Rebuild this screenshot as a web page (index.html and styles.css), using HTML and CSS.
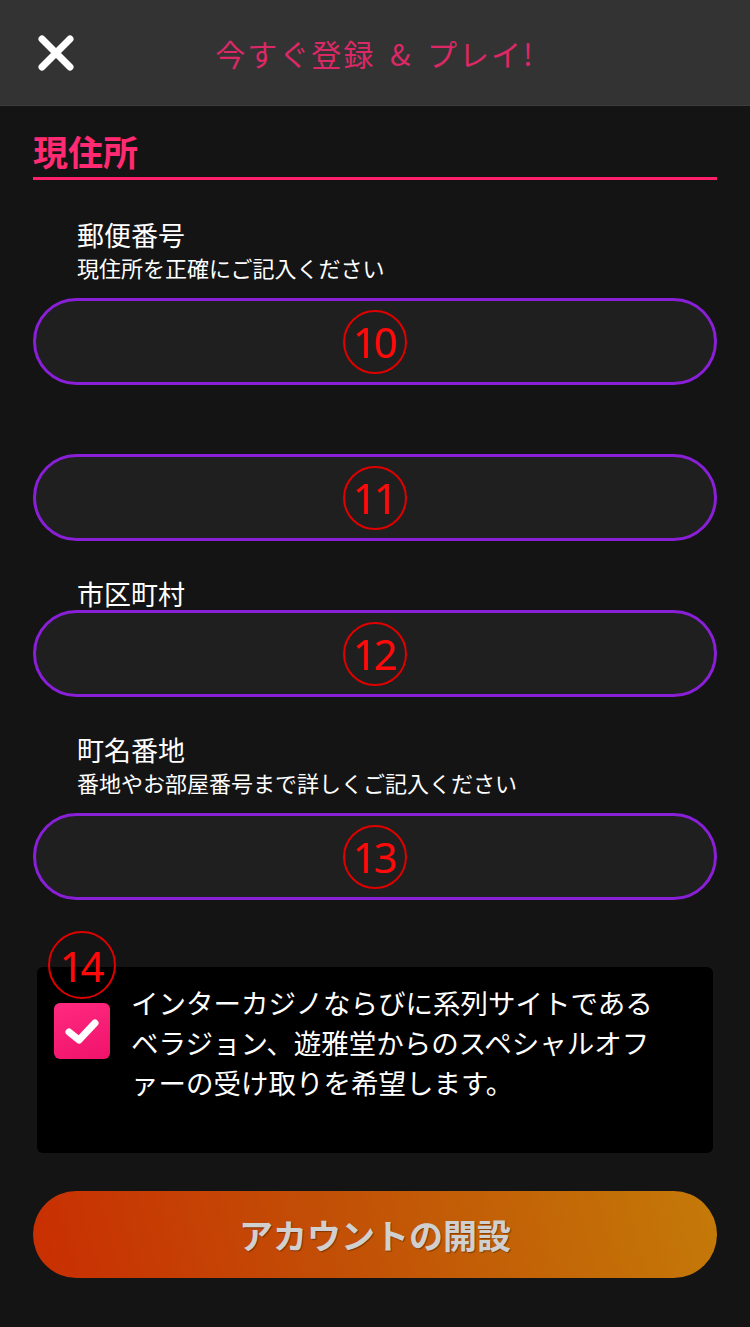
FILE: index.html
```html
<!DOCTYPE html>
<html lang="ja">
<head>
    <meta charset="UTF-8">
    <meta name="viewport" content="width=device-width, initial-scale=1.0">
    <title>今すぐ登録 & プレイ!</title>
    <link rel="stylesheet" href="styles.css">
</head>
<body>
    <header class="topbar">
        <button class="close-btn" type="button" aria-label="閉じる">
            <svg width="36" height="36" viewBox="0 0 36 36">
                <path d="M4 4 L32 32 M32 4 L4 32" stroke="#ffffff" stroke-width="7" stroke-linecap="round" fill="none"/>
            </svg>
        </button>
        <h1 class="topbar-title">今すぐ登録 &amp; プレイ!</h1>
        <span class="topbar-spacer"></span>
    </header>

    <main class="form">
        <h2 class="section-title">現住所</h2>

        <div class="field">
            <label class="field-label">郵便番号</label>
            <p class="field-note">現住所を正確にご記入ください</p>
            <div class="field-input"><span class="mark">10</span></div>
        </div>

        <div class="field field-gap">
            <div class="field-input"><span class="mark">11</span></div>
        </div>

        <div class="field">
            <label class="field-label">市区町村</label>
            <div class="field-input"><span class="mark">12</span></div>
        </div>

        <div class="field">
            <label class="field-label">町名番地</label>
            <p class="field-note">番地やお部屋番号まで詳しくご記入ください</p>
            <div class="field-input"><span class="mark">13</span></div>
        </div>

        <div class="consent">
            <span class="mark mark-over">14</span>
            <span class="checkbox">
                <svg width="56" height="56" viewBox="0 0 56 56">
                    <path d="M15 29 L25 37 L41 20" stroke="#ffffff" stroke-width="7" stroke-linecap="round" stroke-linejoin="round" fill="none"/>
                </svg>
            </span>
            <p class="consent-text">インターカジノならびに系列サイトである<br>ベラジョン、遊雅堂からのスペシャルオフ<br>ァーの受け取りを希望します。</p>
        </div>

        <button class="submit-btn" type="button">アカウントの開設</button>
    </main>
</body>
</html>
```

FILE: styles.css
```css
body {
    margin: 0;
    background-color: #141414;
    color: #ffffff;
    font-family: "Noto Sans CJK JP", "Noto Sans", sans-serif;
}
.topbar {
    height: 106px;
    display: flex;
    align-items: center;
    background-color: #333333;
    border-bottom: 1px solid #3c3c3c;
    box-sizing: border-box;
    padding: 0 38px;
}
.close-btn {
    width: 36px;
    height: 36px;
    padding: 0;
    border: none;
    background: none;
    display: flex;
}
.topbar-title {
    flex: 1;
    margin: 0;
    text-align: center;
    font-size: 30px;
    font-weight: 400;
    letter-spacing: 2px;
    word-spacing: 6px;
    color: #dc2866;
}
.topbar-spacer {
    width: 36px;
}
.form {
    padding: 25px 33px 0;
}
.section-title {
    margin: 0;
    font-size: 35px;
    line-height: 40px;
    font-weight: 700;
    color: #ff2a72;
    padding-bottom: 6px;
    border-bottom: 3px solid #ff1f6b;
}
.field {
    margin-top: 37px;
}
.field:first-of-type {
    margin-top: 39px;
}
.field-gap {
    margin-top: 69px;
}
.field-label {
    display: block;
    padding-left: 44px;
    font-size: 27px;
    line-height: 32px;
}
.field-note {
    margin: 4px 0 0;
    padding-left: 44px;
    font-size: 22px;
    line-height: 24px;
}
.field-note + .field-input {
    margin-top: 19px;
}
.field-input {
    height: 87px;
    box-sizing: border-box;
    border: 3px solid #8a1fd8;
    border-radius: 44px;
    background-color: #1f1f1f;
    display: flex;
    align-items: center;
    justify-content: center;
}
.mark {
    width: 64px;
    height: 64px;
    box-sizing: border-box;
    border: 2px solid #e00000;
    border-radius: 50%;
    display: flex;
    align-items: center;
    justify-content: center;
    color: #ff0a0a;
    font-family: "Noto Sans", sans-serif;
    font-size: 42px;
    letter-spacing: -3px;
    text-indent: -3px;
}
.consent {
    position: relative;
    margin: 67px 4px 0;
    height: 186px;
    box-sizing: border-box;
    padding: 15px 17px 0;
    background-color: #000000;
    border-radius: 6px;
    display: flex;
    align-items: flex-start;
    gap: 21px;
}
.mark-over {
    position: absolute;
    left: 11px;
    top: -36px;
    width: 68px;
    height: 68px;
    background: transparent;
}
.checkbox {
    flex: none;
    width: 56px;
    height: 56px;
    margin-top: 21px;
    border-radius: 6px;
    background: linear-gradient(160deg, #ff2a80, #f0126a);
    display: flex;
}
.consent-text {
    margin: 0;
    font-size: 27.5px;
    line-height: 40px;
}
.submit-btn {
    display: block;
    width: 100%;
    height: 87px;
    margin-top: 38px;
    border: none;
    border-radius: 44px;
    background: linear-gradient(75deg, #c92e02 0%, #c25006 45%, #c47a08 100%);
    color: #d0d0d0;
    font-family: "Noto Sans CJK JP", sans-serif;
    font-size: 34px;
    font-weight: 700;
    text-shadow: 1px 1px 1px rgba(0, 0, 0, 0.35);
}
```
